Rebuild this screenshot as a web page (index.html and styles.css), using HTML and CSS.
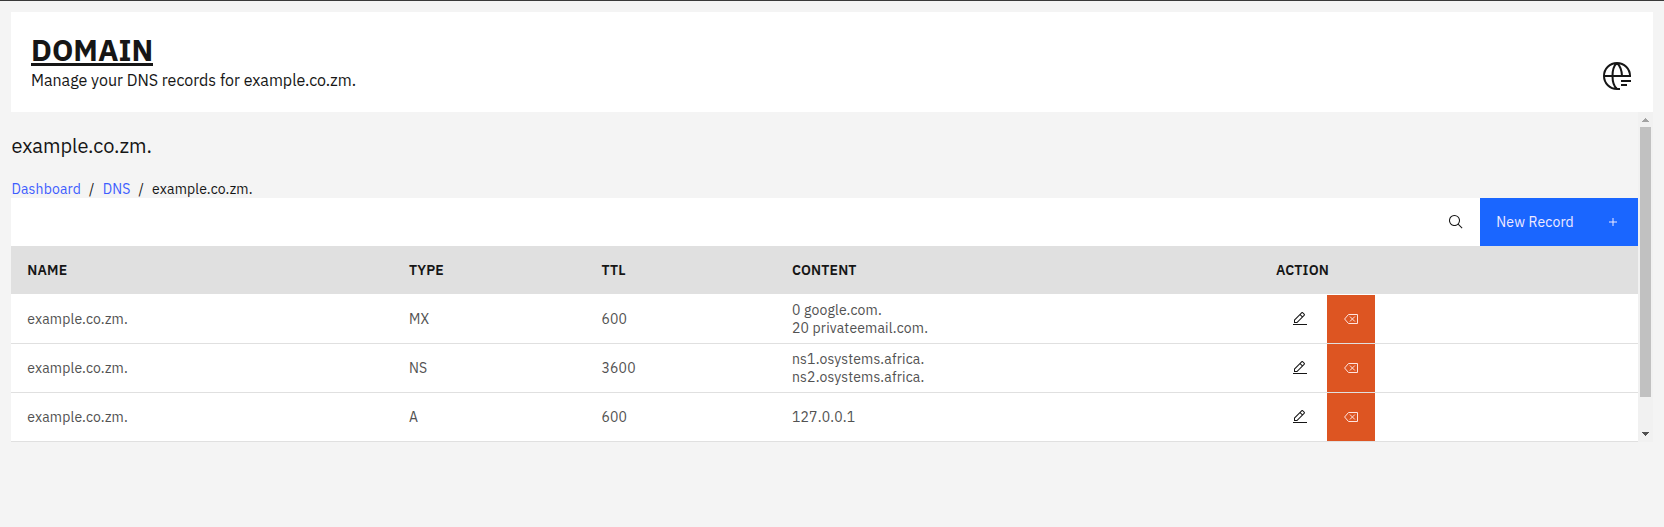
FILE: index.html
```html
<!DOCTYPE html>
<html lang="en">
<head>
<meta charset="utf-8">
<title>Domain</title>
<link rel="stylesheet" href="styles.css">
</head>
<body>
<svg class="defs" width="0" height="0">
  <symbol id="edit" viewBox="0 0 32 32"><path d="M2 26h28v2H2zM25.4 9c.8-.8.8-2 0-2.8l-3.6-3.6c-.8-.8-2-.8-2.8 0l-15 15V24h6.4l15-15zm-5-5L24 7.6l-3 3L17.4 7l3-3zM6 22v-3.6l10-10 3.6 3.6-10 10H6z"/></symbol>
  <symbol id="erase" viewBox="0 0 16 16"><path d="M5.5 3.5h9v9h-9L1.6 8zM6.9 5.5l5 5m0-5-5 5" fill="none" stroke="currentColor"/></symbol>
</svg>
<header class="banner">
  <div>
    <h1 class="title"><span>DOMAIN</span></h1>
    <p class="subtitle">Manage your DNS records for example.co.zm.</p>
  </div>
  <svg class="globe" viewBox="0 0 32 32" width="32" height="32" stroke="currentColor" stroke-width="2"><path d="M29 16A13 13 0 1 0 16 29h3M3 16h27M16 3c-6 5-6 21 0 26M16 3c3.2 3 4.8 8 5 13M20 21h10M20 25h6"/></svg>
</header>
<div class="scroller">
  <main class="content">
    <h2 class="zone">example.co.zm.</h2>
    <nav class="crumbs"><a>Dashboard</a><i>/</i><a>DNS</a><i>/</i><span>example.co.zm.</span></nav>
    <div class="toolbar">
      <svg class="search" viewBox="0 0 32 32" width="16" height="16"><path d="M29 27.586l-7.552-7.552a11.018 11.018 0 1 0-1.414 1.414L27.586 29ZM4 13a9 9 0 1 1 9 9A9.01 9.01 0 0 1 4 13Z"/></svg>
      <button class="new"><span>New Record</span><svg width="8" height="8" viewBox="0 0 8 8"><path d="M4 0v8M0 4h8" stroke="currentColor"/></svg></button>
    </div>
    <div class="row head"><b>NAME</b><b>TYPE</b><b>TTL</b><b>CONTENT</b><b>ACTION</b></div>
    <div class="body">
      <div class="row"><span>example.co.zm.</span><span>MX</span><span>600</span><span>0 google.com.<br>20 privateemail.com.</span><div class="actions"><button class="edit"><svg><use href="#edit"/></svg></button><button class="del"><svg><use href="#erase"/></svg></button></div></div>
      <div class="row"><span>example.co.zm.</span><span>NS</span><span>3600</span><span>ns1.osystems.africa.<br>ns2.osystems.africa.</span><div class="actions"><button class="edit"><svg><use href="#edit"/></svg></button><button class="del"><svg><use href="#erase"/></svg></button></div></div>
      <div class="row"><span>example.co.zm.</span><span>A</span><span>600</span><span>127.0.0.1</span><div class="actions"><button class="edit"><svg><use href="#edit"/></svg></button><button class="del"><svg><use href="#erase"/></svg></button></div></div>
    </div>
  </main>
  <div class="scrollbar">
    <svg class="up" width="7" height="4" viewBox="0 0 7 4"><path d="M3 0h1v1h1v1h1v1h1v1H0V3h1V2h1V1h1z"/></svg>
    <div class="thumb"></div>
    <svg class="down" width="7" height="4" viewBox="0 0 7 4"><path d="M0 0h7v1H6v1H5v1H4v1H3V3H2V2H1V1H0z"/></svg>
  </div>
</div>
</body>
</html>
```
FILE: styles.css
```css
* { box-sizing: border-box; margin: 0; padding: 0; }
body {
  height: 527px;
  padding: 11px 11px 0;
  border-top: 1px solid #393939;
  background: #f4f4f4;
  color: #161616;
  font: 14px/18px "IBM Plex Sans", Roboto, sans-serif;
  letter-spacing: 0.16px;
  overflow: hidden;
}
.defs { position: absolute; }
svg { fill: currentColor; }
button { border: 0; font: inherit; letter-spacing: inherit; color: inherit; background: none; }
.banner {
  display: flex;
  justify-content: space-between;
  height: 100px;
  padding: 20px 20px 0;
  background: #fff;
}
.title { height: 37px; font-size: 30px; line-height: 35px; letter-spacing: 0; }
.title span { display: block; width: fit-content; height: 34px; border-bottom: 3px solid #161616; }
.subtitle { font-size: 16px; line-height: 22px; letter-spacing: 0; }
.globe { margin-top: 28px; fill: none; }
.scroller { display: flex; height: 330px; }
.content { width: 1627px; }
.zone { padding: 20px 0 0 0.4px; font-size: 20px; font-weight: 400; line-height: 28px; letter-spacing: 0; }
.crumbs { display: flex; gap: 8px; height: 38px; padding: 20px 0 0 0.4px; }
.crumbs a { color: #3d5dff; }
.crumbs i { font-style: normal; }
.toolbar { display: flex; align-items: center; justify-content: flex-end; height: 48px; background: #fff; }
.search { margin-right: 16px; }
.new {
  display: flex;
  align-items: center;
  justify-content: space-between;
  width: 158px;
  height: 48px;
  padding: 0 21px 0 16.3px;
  background: #1a66ff;
  color: #f0eaff;
}
.row {
  display: grid;
  grid-template-columns: 381.6px 192.6px 190.5px 484px 1fr;
  align-items: center;
  height: 49px;
  padding-left: 16.3px;
  border-bottom: 1px solid #e0e0e0;
  background: #fff;
  color: #525252;
}
.head { height: 48px; border: 0; background: #e0e0e0; color: #161616; }
.head b { font-weight: 600; }
.body { padding-top: 1px; background: #fff; }
.actions { display: flex; gap: 3px; }
.actions button { display: flex; align-items: center; justify-content: center; width: 48px; height: 48px; }
.actions svg { width: 16px; height: 16px; }
.edit { color: #161616; }
.del { background: #dd5522; color: #ffe4e0; }
.scrollbar {
  display: flex;
  flex-direction: column;
  align-items: center;
  width: 15px;
  padding: 6px 0;
  background: #f1f1f1;
}
.thumb { width: 11px; height: 270px; margin-top: 5px; background: #c1c1c1; }
.up { fill: #a3a3a3; }
.down { margin-top: auto; fill: #505050; }
```
